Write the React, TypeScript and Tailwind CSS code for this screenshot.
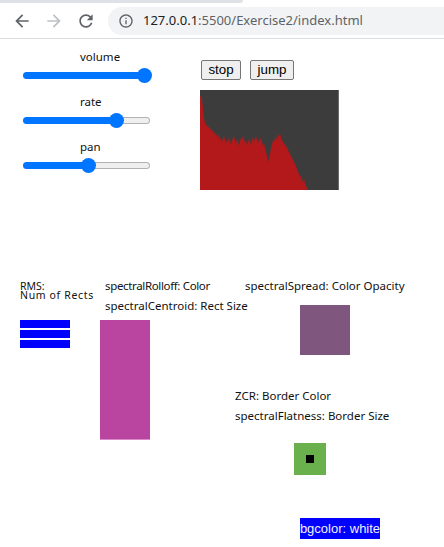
import React from "react";

const spectrum: [number, number][] = [
  [0, 8], [1, 5], [2, 9], [3, 20], [4, 28], [5, 33], [6, 36], [7, 34], [8, 38], [9, 36], [10, 40],
  [11, 38], [12, 42], [13, 40], [14, 44], [15, 42], [16, 46], [17, 44], [18, 48], [19, 45], [20, 50],
  [21, 47], [22, 52], [23, 48], [24, 46], [25, 50], [26, 54], [27, 49], [28, 52], [29, 47], [30, 50],
  [31, 55], [32, 51], [33, 48], [34, 46], [35, 50], [36, 53], [37, 49], [38, 52], [39, 56], [40, 51],
  [41, 48], [42, 50], [43, 45], [44, 49], [45, 53], [46, 50], [47, 55], [48, 52], [49, 49], [50, 51],
  [51, 56], [52, 50], [53, 47], [54, 52], [55, 48], [56, 46], [57, 50], [58, 54], [59, 49], [60, 51],
  [61, 47], [62, 52], [63, 56], [64, 53], [65, 58], [66, 62], [67, 66], [68, 72], [69, 68], [70, 64],
  [71, 58], [72, 54], [73, 50], [74, 52], [75, 48], [76, 46], [77, 50], [78, 44], [79, 47], [80, 43],
  [81, 48], [82, 52], [83, 50], [84, 55], [85, 53], [86, 58], [87, 56], [88, 60], [89, 62], [90, 64],
  [91, 66], [92, 68], [93, 70], [94, 72], [95, 74], [96, 76], [97, 79], [98, 82], [99, 84], [100, 87],
  [101, 85], [102, 90], [103, 92], [104, 88], [105, 94], [106, 96], [107, 98], [108, 100],
];

function Slider({ label, fill }: { label: string; fill: number }) {
  return (
    <div className="flex flex-col">
      <div className="h-[17px] pl-[57px] text-[11.5px] leading-[17px] text-[#111]">{label}</div>
      <div className="relative mt-[2px] flex h-[16px] items-center">
        <div className="flex h-[7px] w-[127px]">
          <div className="h-full rounded-l-full bg-[#0075ff]" style={{ width: fill }} />
          <div className="h-full flex-1 rounded-r-full border border-l-0 border-[#b2b2b2] bg-[#efefef]" />
        </div>
        <div
          className="absolute top-[0.5px] h-[15px] w-[15px] rounded-full bg-[#0075ff]"
          style={{ left: fill - 7.5 }}
        />
      </div>
    </div>
  );
}

export default function App() {
  const pts = "0,100 " + spectrum.map(([x, y]) => `${x},${y}`).join(" ");
  return (
    <div className="h-[547px] w-[444px] overflow-hidden bg-white font-['Noto_Sans',sans-serif] text-black">
      {/* browser chrome */}
      <div className="h-[39px] border-b border-[#dadce0]">
        <div className="h-[3px] w-[243px] rounded-br-[5px] bg-[#dee1e6]" />
        <div className="flex h-[35px] items-center gap-[12px] pl-[12px]">
          <svg width="20" height="20" viewBox="0 0 24 24" fill="#5f6368">
            <path d="M20 11H7.83l5.59-5.59L12 4l-8 8 8 8 1.41-1.41L7.83 13H20v-2z" />
          </svg>
          <svg width="20" height="20" viewBox="0 0 24 24" fill="#bdc1c6">
            <path d="M12 4l-1.41 1.41L16.17 11H4v2h12.17l-5.58 5.59L12 20l8-8z" />
          </svg>
          <svg width="20" height="20" viewBox="0 0 24 24" fill="#5f6368">
            <path d="M17.65 6.35C16.2 4.9 14.21 4 12 4c-4.42 0-7.99 3.58-7.99 8s3.57 8 7.99 8c3.73 0 6.84-2.55 7.73-6h-2.08c-.82 2.33-3.04 4-5.65 4-3.31 0-6-2.69-6-6s2.69-6 6-6c1.66 0 3.14.69 4.22 1.78L13 11h7V4l-2.35 2.35z" />
          </svg>
          <div className="flex h-[28px] flex-1 items-center rounded-l-full bg-[#f1f3f4] pl-[10px]">
            <svg width="16" height="16" viewBox="0 0 24 24" fill="#5f6368">
              <path d="M11 7h2v2h-2zm0 4h2v6h-2zm1-9C6.48 2 2 6.48 2 12s4.48 10 10 10 10-4.48 10-10S17.52 2 12 2zm0 18c-4.41 0-8-3.59-8-8s3.59-8 8-8 8 3.59 8 8-3.59 8-8 8z" />
            </svg>
            <div className="ml-[9px] whitespace-nowrap text-[13px] leading-none">
              <span className="text-[#202124]">127.0.0.1</span>
              <span className="text-[#5f6368]">:5500/Exercise2/index.html</span>
            </div>
          </div>
        </div>
      </div>

      {/* top row */}
      <div className="flex">
        <div className="ml-[23px] mt-[9px] flex w-[127px] flex-col gap-[10px]">
          <Slider label="volume" fill={121} />
          <Slider label="rate" fill={93} />
          <Slider label="pan" fill={65} />
        </div>
        <div className="ml-[50px] mt-[21px] flex flex-col">
          <div className="ml-[1px] flex gap-[9px] font-['Liberation_Sans',Arial,sans-serif] text-[13.33px]">
            <div className="flex h-[20px] w-[40px] items-center justify-center rounded-[2px] border border-[#767676] bg-[#efefef]">
              stop
            </div>
            <div className="flex h-[20px] w-[44px] items-center justify-center rounded-[2px] border border-[#767676] bg-[#efefef]">
              jump
            </div>
          </div>
          <div className="mt-[10px] h-[100px] w-[139px] border-r border-[#6a6a6a] bg-[#3c3c3c]">
            <svg width="138" height="100" viewBox="0 0 138 100">
              <polygon points={pts} fill="#b3181b" />
            </svg>
          </div>
        </div>
      </div>

      {/* bottom section */}
      <div className="mt-[86px] flex text-[11.5px] text-[#111]">
        <div className="ml-[20px] flex w-[80px] flex-col pt-[6px]">
          <div className="text-[10.5px] leading-[8.5px]">RMS:</div>
          <div className="whitespace-nowrap text-[10.5px] leading-[8.5px] tracking-[0.65px]">Num of Rects</div>
          <div className="mt-[21px] flex flex-col gap-[2px]">
            <div className="h-[8px] w-[50px] bg-[#0000ff]" />
            <div className="h-[8px] w-[50px] bg-[#0000ff]" />
            <div className="h-[8px] w-[50px] bg-[#0000ff]" />
          </div>
        </div>
        <div className="flex w-[135px] flex-col">
          <div className="whitespace-nowrap pl-[5px] leading-[20px] tracking-[-0.35px]">spectralRolloff: Color</div>
          <div className="whitespace-nowrap pl-[5px] leading-[20px]">spectralCentroid: Rect Size</div>
          <div className="mt-[4px] h-[120px] w-[50px] border-b border-[#d98bc9] bg-[#ba45a1]" />
        </div>
        <div className="flex flex-col">
          <div className="whitespace-nowrap pl-[10px] leading-[20px]">spectralSpread: Color Opacity</div>
          <div className="ml-[65px] mt-[9px] h-[50px] w-[50px] bg-[#7e567e]" />
          <div className="mt-[31px] whitespace-nowrap leading-[20px]">ZCR: Border Color</div>
          <div className="whitespace-nowrap leading-[20px]">spectralFlatness: Border Size</div>
          <div className="ml-[59px] mt-[17px] flex h-[32px] w-[32px] items-center justify-center bg-[#6ab04c]">
            <div className="h-[8px] w-[8px] bg-black" />
          </div>
          <div className="ml-[65px] mt-[43px] flex h-[21px] w-[80px] items-center justify-center whitespace-nowrap bg-[#0000ff] font-['Liberation_Sans',Arial,sans-serif] text-[13px] text-[#f2f2ff]">
            bgcolor: white
          </div>
        </div>
      </div>
    </div>
  );
}
